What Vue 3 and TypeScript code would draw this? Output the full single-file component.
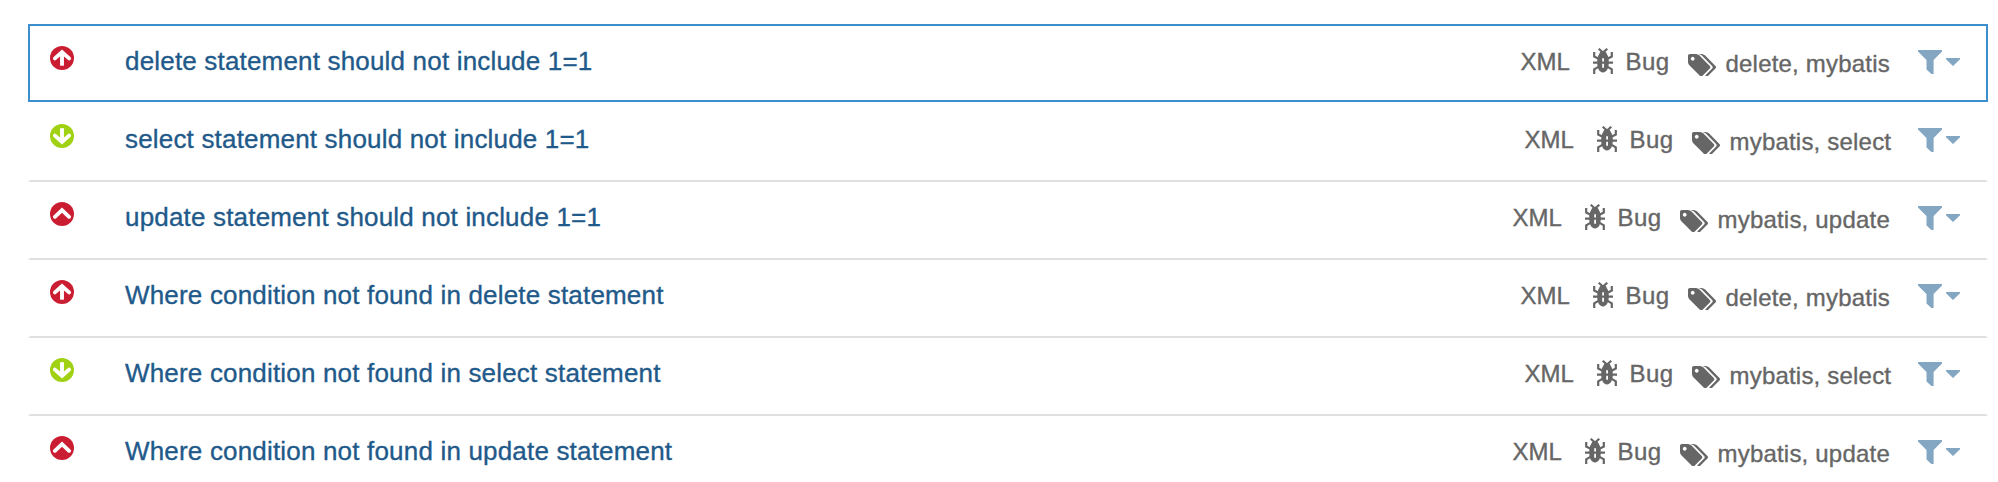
<script setup lang="ts">
type Severity = 'critical' | 'minor' | 'major'

interface Rule {
  name: string
  severity: Severity
  lang: string
  type: string
  tags: string[]
  tagsWidth: number
}

const subjects: { tag: string; severity: Severity; tagsWidth: number }[] = [
  { tag: 'delete', severity: 'critical', tagsWidth: 165.5 },
  { tag: 'select', severity: 'minor', tagsWidth: 161.5 },
  { tag: 'update', severity: 'major', tagsWidth: 173.5 },
]

const toRule = (name: string, s: (typeof subjects)[number]): Rule => ({
  name,
  severity: s.severity,
  lang: 'XML',
  type: 'Bug',
  tags: [s.tag, 'mybatis'].sort(),
  tagsWidth: s.tagsWidth,
})

const rules: Rule[] = [
  ...subjects.map((s) => toRule(`${s.tag} statement should not include 1=1`, s)),
  ...subjects.map((s) => toRule(`Where condition not found in ${s.tag} statement`, s)),
]

const selected = 0
</script>

<template>
  <main class="rules">
    <article
      v-for="(rule, i) in rules"
      :key="rule.name"
      class="rule"
      :class="{ selected: i === selected }"
    >
      <svg class="severity" :class="rule.severity" viewBox="0 0 24 24">
        <circle cx="12" cy="12" r="12" />
        <path v-if="rule.severity === 'critical'" class="mark" d="M4.9 12.4 12 6.2l7.1 6.2" />
        <path v-if="rule.severity === 'critical'" class="stem" d="M12 7v12.7" />
        <path v-if="rule.severity === 'minor'" class="mark" d="M4.9 11.6 12 17.8l7.1-6.2" />
        <path v-if="rule.severity === 'minor'" class="stem" d="M12 4.2V17" />
        <path v-if="rule.severity === 'major'" class="mark" d="M4.9 14.8 12 8.1l7.1 6.7" />
      </svg>
      <a class="name">{{ rule.name }}</a>
      <span class="lang">{{ rule.lang }}</span>
      <svg class="bug" viewBox="0 0 20 26">
        <path class="limb" d="M5.7.8 10 4.6 14.3.8M1.2 4v4.6l5 2.4M18.8 4v4.6L14 11M0 14.7h20M1.2 26v-4.6l5-3M18.8 26v-4.6l-5-3" />
        <path d="M6 7Q6.5 3 10 3t4 4z" />
        <path fill-rule="evenodd" d="M6.4 6h7.2Q15.8 8 15.8 14c0 6-2 10.4-5.8 10.4S4.2 20 4.2 14q0-6 2.2-8zM9.2 10.3v9.5h1.8v-9.5z" />
      </svg>
      <span class="type">{{ rule.type }}</span>
      <svg class="tag-icon" viewBox="0 128 1899 1515">
        <path d="M448 448q0-53-37.5-90.5T320 320t-90.5 37.5T192 448t37.5 90.5T320 576t90.5-37.5T448 448zm1067 576q0 53-37 90l-491 492q-39 37-91 37-53 0-90-37L91 890q-38-37-64.5-101T0 672V256q0-52 38-90t90-38h416q53 0 117 26.5T763 219l715 714q37 39 37 91zm384 0q0 53-37 90l-491 492q-39 37-91 37-36 0-59-14t-53-45l470-470q37-37 37-90 0-52-37-91L923 219q-38-38-102-64.5T704 128h224q53 0 117 26.5t102 64.5l715 714q37 39 37 91z" />
      </svg>
      <span class="tags" :style="{ width: rule.tagsWidth + 'px' }">{{ rule.tags.join(', ') }}</span>
      <svg class="filter" viewBox="0 0 42 24">
        <path d="M0 0h24v1.6L15.6 10v14h-2.2L8.5 19.4V10L0 1.6zM28 8h14v1.2L35 16l-7-6.8z" />
      </svg>
    </article>
  </main>
</template>

<style>
body {
  margin: 0;
  background: #fff;
  overflow: hidden;
}
</style>

<style scoped>
.rules {
  box-sizing: border-box;
  height: 482px;
  padding: 24px 10px 0 28px;
  overflow: hidden;
  font-family: "Liberation Sans", Arial, sans-serif;
  font-size: 24px;
  line-height: 28px;
  color: #666;
  -webkit-text-stroke: 0.35px currentColor;
}

.rule {
  box-sizing: border-box;
  height: 78px;
  display: flex;
  align-items: flex-start;
  padding: 20px 26px 0 20px;
  border: solid transparent;
  border-width: 0 2px 2px;
  border-bottom-color: #e0e0e0;
  white-space: nowrap;
}

.rule.selected {
  border: 2px solid #3d8ecd;
  margin-bottom: 2px;
}

svg {
  display: block;
  flex: none;
  fill: currentColor;
}

.severity {
  width: 24px;
  height: 24px;
  color: #cb1d32;
}

.severity.minor {
  color: #a0d113;
}

.mark,
.stem {
  fill: none;
  stroke: #fff;
  stroke-width: 3.9;
}

.mark {
  stroke-linecap: round;
}

.name {
  flex: 1;
  margin-left: 51px;
  font-size: 26px;
  line-height: 30px;
  letter-spacing: 0.18px;
  color: #1f5a8a;
}

.lang,
.type {
  margin-top: 2px;
}

.lang {
  width: 51px;
}

.bug {
  width: 20px;
  height: 26px;
  margin: 2px 0 0 21.5px;
}

.limb {
  fill: none;
  stroke: currentColor;
  stroke-width: 2.2;
}

.type {
  width: 46px;
  margin-left: 12.5px;
  letter-spacing: 0.4px;
}

.tag-icon {
  width: 28px;
  height: 22.4px;
  margin: 8px 0 0 16.5px;
}

.tags {
  margin: 4px 0 0 9.5px;
  letter-spacing: 0.2px;
}

.filter {
  width: 42px;
  height: 24px;
  margin: 4px 0 0 27px;
  color: #83a6c2;
}
</style>
